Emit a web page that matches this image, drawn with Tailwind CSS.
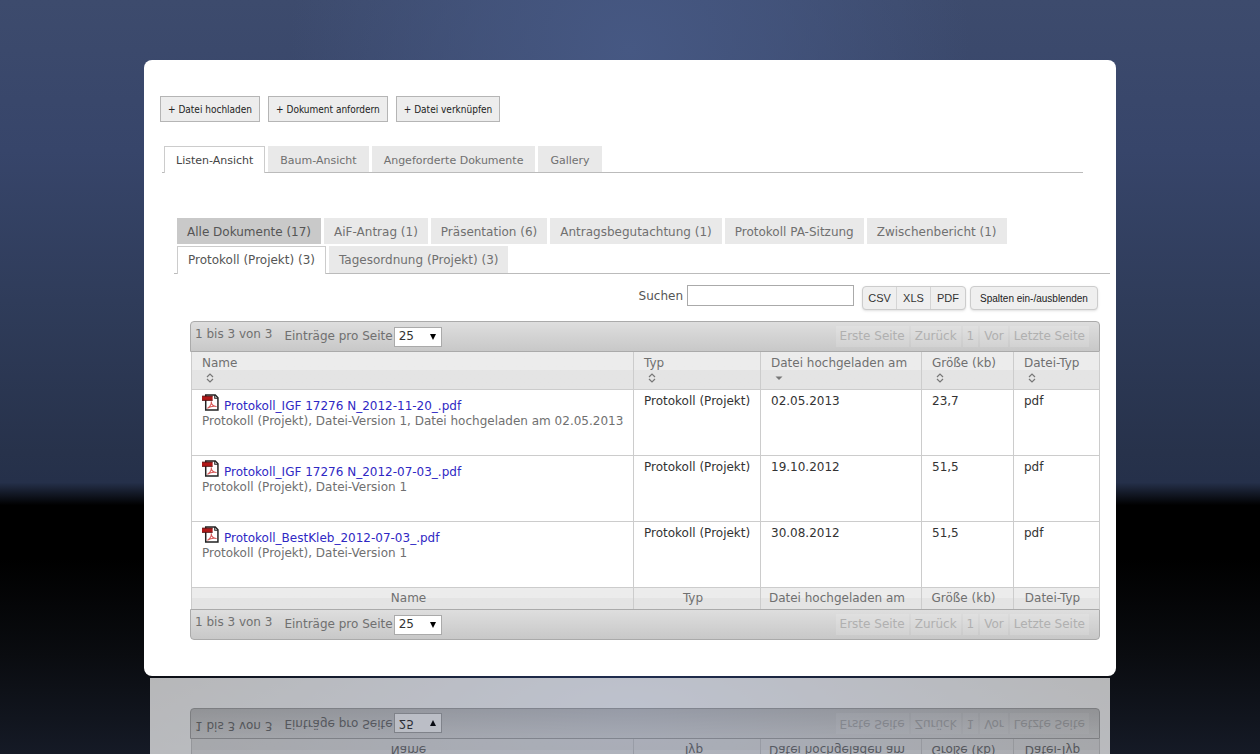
<!DOCTYPE html>
<html lang="de">
<head>
  <meta charset="UTF-8" />
  <meta name="viewport" content="width=device-width, initial-scale=1" />
  <title>Dokumente</title>
  <script src="https://cdn.jsdelivr.net/npm/@tailwindcss/browser@4"></script>
</head>
<body class="min-h-screen pt-15 font-['DejaVu_Sans',sans-serif] text-[12px] leading-[15px] text-[#707070] bg-[radial-gradient(circle_340px_at_50%_50px,#465883_0%,#46588399_45%,#46588300_100%),radial-gradient(ellipse_480px_180px_at_50%_94%,#24335a_0%,#24335a00_100%),linear-gradient(to_bottom,#3d4b6d_0%,#37456a_20%,#2f3c5a_40%,#27324b_60%,#25304a_64%,#000_67%,#000_74%,#0a0c10_87%,#151a26_100%)]">

  <!-- Icons -->
  <svg class="hidden" aria-hidden="true">
    <symbol id="icon-pdf" viewBox="0 0 16 16">
      <path d="M3.500 1h9l2.500 2.500v11.500h-11.500z" fill="#fff" stroke="#222" stroke-width="1.4" />
      <path d="M12 1v3h3" fill="none" stroke="#222" stroke-width="1" />
      <path d="M0 2h10v4h-10z" fill="#b01818" />
      <path d="M0 2h10M0 6h10" stroke="#4d0d0d" stroke-width=".8" />
      <path d="M5 13.500c2.500-1.500 4-4.500 3.700-6.500 0 3 2.300 5 5 4.800-2.700-.6-5.700-.2-8.700 1.700z" fill="none" stroke="#d85a5a" stroke-width="1" />
    </symbol>
    <symbol id="icon-sort" viewBox="0 0 8 10">
      <path d="M1 4l3-3 3 3M1 6l3 3 3-3" fill="none" stroke="#777" stroke-width="1.2" />
    </symbol>
    <symbol id="icon-desc" viewBox="0 0 8 10">
      <path d="M.5 3.500h7l-3.500 3.500z" fill="#777" />
    </symbol>
    <symbol id="icon-arrow" viewBox="0 0 6 6">
      <path d="M0 0h6l-3 6z" fill="#000" />
    </symbol>
  </svg>

  <main id="card" class="mx-36 rounded-lg bg-white pt-9 pb-9">

    <!-- Actions -->
    <div class="flex gap-2 px-4 font-['DejaVu_Sans_Condensed','DejaVu_Sans',sans-serif] text-[10px] text-[#222]">
      <button class="h-[26px] border border-[#b5b5b5] bg-[#ededed] px-[7px]">+ Datei hochladen</button>
      <button class="h-[26px] border border-[#b5b5b5] bg-[#ededed] px-[7px]">+ Dokument anfordern</button>
      <button class="h-[26px] border border-[#b5b5b5] bg-[#ededed] px-[7px]">+ Datei verknüpfen</button>
    </div>

    <!-- View tabs -->
    <nav class="mt-6 mr-[33px] ml-[18px] flex gap-[3px] border-b border-[#bbb] pl-0.5 text-[11px] leading-[15px]">
      <a href="#" class="-mb-px border border-b-0 border-[#ccc] bg-white px-[11px] pt-1.5 pb-[5px] text-[#444]">Listen-Ansicht</a>
      <a href="#" class="bg-[#e9e9e9] px-3 pt-[7px] pb-1">Baum-Ansicht</a>
      <a href="#" class="bg-[#e9e9e9] px-3 pt-[7px] pb-1">Angeforderte Dokumente</a>
      <a href="#" class="bg-[#e9e9e9] px-3 pt-[7px] pb-1">Gallery</a>
    </nav>

    <!-- Document type tabs -->
    <nav class="mt-[45px] mr-1.5 ml-[30px] flex flex-col gap-0.5 border-b border-[#bbb] pl-[3px]">
      <div class="flex gap-[3px]">
        <a href="#" class="bg-[#c9c9c9] px-2.5 pt-[7px] pb-1 text-[#555]">Alle Dokumente (17)</a>
        <a href="#" class="bg-[#e9e9e9] px-2.5 pt-[7px] pb-1">AiF-Antrag (1)</a>
        <a href="#" class="bg-[#e9e9e9] px-2.5 pt-[7px] pb-1">Präsentation (6)</a>
        <a href="#" class="bg-[#e9e9e9] px-2.5 pt-[7px] pb-1">Antragsbegutachtung (1)</a>
        <a href="#" class="bg-[#e9e9e9] px-2.5 pt-[7px] pb-1">Protokoll PA-Sitzung</a>
        <a href="#" class="bg-[#e9e9e9] px-2.5 pt-[7px] pb-1">Zwischenbericht (1)</a>
      </div>
      <div class="flex gap-[3px]">
        <a href="#" class="-mb-px border border-b-0 border-[#ccc] bg-white px-2.5 pt-1.5 pb-1.5 text-[#555]">Protokoll (Projekt) (3)</a>
        <a href="#" class="bg-[#e9e9e9] px-2.5 pt-[7px] pb-1">Tagesordnung (Projekt) (3)</a>
      </div>
    </nav>

    <section class="mr-4 ml-[46px]">
      <!-- Search and export -->
      <div class="flex items-start justify-end pt-[11px] pr-0.5 pb-[11px]">
        <label for="search" class="mr-1 pt-1 text-[#555]">Suchen</label>
        <input id="search" type="text" class="h-[21px] w-[167px] border border-[#aaa] bg-white px-1" />
        <div class="mt-px ml-2 flex h-6 rounded-sm border border-[#ccc] bg-[#efefef] font-['Liberation_Sans',sans-serif] text-[11px] text-[#333] shadow-sm">
          <button class="w-[34px] border-r border-[#d5d5d5]">CSV</button>
          <button class="w-[34px] border-r border-[#d5d5d5]">XLS</button>
          <button class="w-[34px]">PDF</button>
        </div>
        <button class="mt-px ml-1 h-6 w-32 rounded-sm border border-[#ccc] bg-[#efefef] font-['Liberation_Sans',sans-serif] text-[10px] text-[#222] shadow-sm">Spalten ein-/ausblenden</button>
      </div>

      <!-- Pager top -->
      <div class="flex h-[31px] items-center rounded-t border border-[#aaa] bg-linear-to-b from-[#dedede] to-[#c8c8c8] pr-2.5 pl-1">
        <span class="pb-[5px]">1 bis 3 von 3</span>
        <label class="ml-3 flex items-center gap-px">Einträge pro Seite
          <span class="relative">
            <select class="block h-5 w-12 appearance-none border border-[#aaa] bg-white pl-1 text-[#333]"><option>25</option></select>
            <svg class="pointer-events-none absolute top-[7px] right-1.5 size-1.5"><use href="#icon-arrow" /></svg>
          </span>
        </label>
        <div class="ml-auto flex gap-0.5 text-[#b0b0b0]">
          <button class="bg-white/15 px-1 py-[3px]">Erste Seite</button>
          <button class="bg-white/15 px-1 py-[3px]">Zurück</button>
          <button class="bg-white/15 px-1 py-[3px]">1</button>
          <button class="bg-white/15 px-1 py-[3px]">Vor</button>
          <button class="bg-white/15 px-1 py-[3px]">Letzte Seite</button>
        </div>
      </div>

      <!-- Documents -->
      <div class="pl-px">
      <table class="w-full table-fixed border-x border-[#ccc] whitespace-nowrap">
        <colgroup>
          <col />
          <col class="w-[127px]" />
          <col class="w-[161px]" />
          <col class="w-[92px]" />
          <col class="w-[86px]" />
        </colgroup>
        <thead class="bg-linear-to-b from-[#ececec] from-50% to-[#e4e4e4] to-50% text-left align-top">
          <tr class="h-[37px] border-b border-[#ccc]">
            <th class="px-2.5 pt-1 font-normal">Name<svg class="mt-0.5 ml-1 h-[10px] w-2"><use href="#icon-sort" /></svg></th>
            <th class="border-l border-[#ccc] px-2.5 pt-1 font-normal">Typ<svg class="mt-0.5 ml-1 h-[10px] w-2"><use href="#icon-sort" /></svg></th>
            <th class="border-l border-[#ccc] pt-1 pl-2.5 font-normal">Datei hochgeladen am<svg class="mt-0.5 ml-1 h-[10px] w-2"><use href="#icon-desc" /></svg></th>
            <th class="border-l border-[#ccc] px-2.5 pt-1 font-normal">Größe (kb)<svg class="mt-0.5 ml-1 h-[10px] w-2"><use href="#icon-sort" /></svg></th>
            <th class="border-l border-[#ccc] px-2.5 pt-1 font-normal">Datei-Typ<svg class="mt-0.5 ml-1 h-[10px] w-2"><use href="#icon-sort" /></svg></th>
          </tr>
        </thead>
        <tbody class="align-top text-[#333]">
          <tr class="h-[66px] border-b border-[#ccc]">
            <td class="px-2.5 pt-1 text-[#707070]">
              <div class="flex gap-[5px]"><svg class="size-[17px]"><use href="#icon-pdf" /></svg><a href="#" class="pt-[5px] text-[#2f28c4]">Protokoll_IGF 17276 N_2012-11-20_.pdf</a></div>
              Protokoll (Projekt), Datei-Version 1, Datei hochgeladen am 02.05.2013
            </td>
            <td class="border-l border-[#ccc] pt-1 pl-2.5">Protokoll (Projekt)</td>
            <td class="border-l border-[#ccc] px-2.5 pt-1">02.05.2013</td>
            <td class="border-l border-[#ccc] px-2.5 pt-1">23,7</td>
            <td class="border-l border-[#ccc] px-2.5 pt-1">pdf</td>
          </tr>
          <tr class="h-[66px] border-b border-[#ccc]">
            <td class="px-2.5 pt-1 text-[#707070]">
              <div class="flex gap-[5px]"><svg class="size-[17px]"><use href="#icon-pdf" /></svg><a href="#" class="pt-[5px] text-[#2f28c4]">Protokoll_IGF 17276 N_2012-07-03_.pdf</a></div>
              Protokoll (Projekt), Datei-Version 1
            </td>
            <td class="border-l border-[#ccc] pt-1 pl-2.5">Protokoll (Projekt)</td>
            <td class="border-l border-[#ccc] px-2.5 pt-1">19.10.2012</td>
            <td class="border-l border-[#ccc] px-2.5 pt-1">51,5</td>
            <td class="border-l border-[#ccc] px-2.5 pt-1">pdf</td>
          </tr>
          <tr class="h-[66px] border-b border-[#ccc]">
            <td class="px-2.5 pt-1 text-[#707070]">
              <div class="flex gap-[5px]"><svg class="size-[17px]"><use href="#icon-pdf" /></svg><a href="#" class="pt-[5px] text-[#2f28c4]">Protokoll_BestKleb_2012-07-03_.pdf</a></div>
              Protokoll (Projekt), Datei-Version 1
            </td>
            <td class="border-l border-[#ccc] pt-1 pl-2.5">Protokoll (Projekt)</td>
            <td class="border-l border-[#ccc] px-2.5 pt-1">30.08.2012</td>
            <td class="border-l border-[#ccc] px-2.5 pt-1">51,5</td>
            <td class="border-l border-[#ccc] px-2.5 pt-1">pdf</td>
          </tr>
        </tbody>
        <tfoot class="bg-linear-to-b from-[#ececec] from-50% to-[#e4e4e4] to-50% text-center">
          <tr class="h-[22px]">
            <td class="pr-2">Name</td>
            <td class="border-l border-[#ccc] pr-2">Typ</td>
            <td class="border-l border-[#ccc] pr-2">Datei hochgeladen am</td>
            <td class="border-l border-[#ccc] pr-2">Größe (kb)</td>
            <td class="border-l border-[#ccc] pr-2">Datei-Typ</td>
          </tr>
        </tfoot>
      </table>
      </div>

      <!-- Pager bottom -->
      <div class="flex h-[31px] items-center rounded-b border border-[#aaa] bg-linear-to-b from-[#dedede] to-[#c8c8c8] pr-2.5 pl-1">
        <span class="pb-[5px]">1 bis 3 von 3</span>
        <label class="ml-3 flex items-center gap-px">Einträge pro Seite
          <span class="relative">
            <select class="block h-5 w-12 appearance-none border border-[#aaa] bg-white pl-1 text-[#333]"><option>25</option></select>
            <svg class="pointer-events-none absolute top-[7px] right-1.5 size-1.5"><use href="#icon-arrow" /></svg>
          </span>
        </label>
        <div class="ml-auto flex gap-0.5 text-[#b0b0b0]">
          <button class="bg-white/15 px-1 py-[3px]">Erste Seite</button>
          <button class="bg-white/15 px-1 py-[3px]">Zurück</button>
          <button class="bg-white/15 px-1 py-[3px]">1</button>
          <button class="bg-white/15 px-1 py-[3px]">Vor</button>
          <button class="bg-white/15 px-1 py-[3px]">Letzte Seite</button>
        </div>
      </div>
    </section>
  </main>

  <!-- Reflection of the card, filled below -->
  <div id="reflection" class="relative mx-[150px] mt-0.5 h-19 overflow-hidden opacity-70" aria-hidden="true" inert></div>

  <script>
    const copy = document.getElementById('card').cloneNode(true);
    copy.removeAttribute('id');
    copy.querySelectorAll('[id]').forEach(el => el.removeAttribute('id'));
    copy.querySelectorAll('[for]').forEach(el => el.removeAttribute('for'));
    // only the table and the pager below it reach into the visible strip
    copy.querySelectorAll('nav, tbody a, thead').forEach(el => el.classList.add('invisible'));
    copy.className = 'absolute -inset-x-1.5 -top-1.5 -scale-y-100 bg-white pt-9 pb-9';
    document.getElementById('reflection').appendChild(copy);
  </script>
</body>
</html>
